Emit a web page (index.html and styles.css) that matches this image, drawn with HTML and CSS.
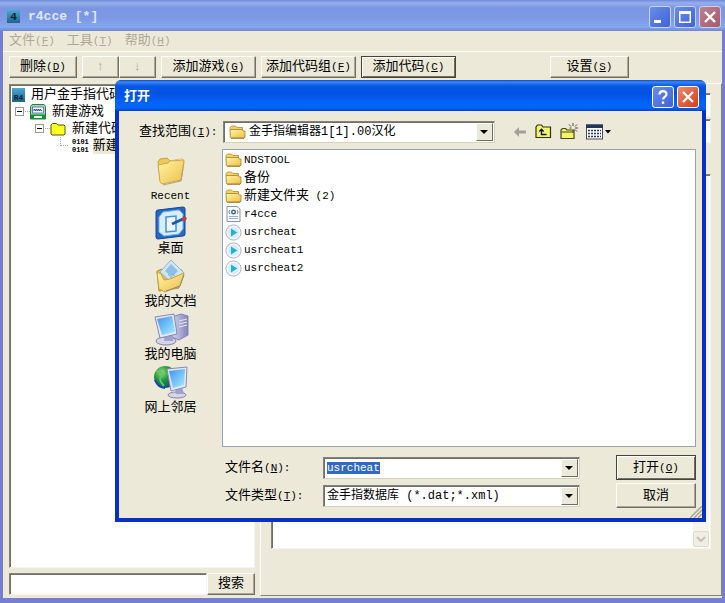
FILE: index.html
```html
<!DOCTYPE html>
<html lang="zh-CN">
<head>
  <meta charset="UTF-8" />
  <meta name="viewport" content="width=device-width, initial-scale=1.0" />
  <title>r4cce [*]</title>
  <link rel="stylesheet" href="styles.css">
</head>
<body>
  <!-- shared icons -->
  <svg class="defs" width="0" height="0">
    <defs>
      <linearGradient id="gold" x1="0" y1="0" x2="1" y2="1">
        <stop offset="0" stop-color="#fff6a8" /><stop offset="1" stop-color="#eebd48" />
      </linearGradient>
      <linearGradient id="screen" x1="0" y1="0" x2="1" y2="1">
        <stop offset="0" stop-color="#3f92f0" /><stop offset="1" stop-color="#a5efff" />
      </linearGradient>
      <linearGradient id="metal" x1="0" y1="0" x2="1" y2="0">
        <stop offset="0" stop-color="#d4d5ee" /><stop offset="1" stop-color="#8184b8" />
      </linearGradient>
      <linearGradient id="teal" x1="0" y1="0" x2="0" y2="1">
        <stop offset="0" stop-color="#4ba9d4" /><stop offset="1" stop-color="#1c6688" />
      </linearGradient>
      <radialGradient id="globe" cx="0.35" cy="0.3" r="0.8">
        <stop offset="0" stop-color="#8fe07a" /><stop offset="0.45" stop-color="#23953a" /><stop offset="1" stop-color="#0b3f9e" />
      </radialGradient>
    </defs>
    <symbol id="folder" viewBox="0 0 17 16">
      <path d="M1 3.5 2.5 2h4L8 3.5h5.5V6H3.5L2 13z" fill="#f3d366" stroke="#b08a2c" stroke-width=".8" />
      <path d="M1.3 13.3 1 5.5h12.2l.8 1.5h2v5.8l-1.5 1.2H2z" fill="url(#gold)" stroke="#b18b30" stroke-width=".9" />
      <path d="M2 14.3h13l1.2-1.4" fill="none" stroke="#94711f" stroke-width=".8" />
    </symbol>
    <symbol id="media" viewBox="0 0 17 17">
      <circle cx="8.5" cy="8.5" r="7.6" fill="#f3f8fd" stroke="#a8b2c4" />
      <circle cx="8.5" cy="8.5" r="5.8" fill="#d9eefb" />
      <path d="M6 4.5 12.3 8.5 6 12.5z" fill="#1fb0dc" />
    </symbol>
    <symbol id="cross" viewBox="0 0 20 20">
      <path d="M5 5 15 15M15 5 5 15" stroke="#fff" stroke-width="2.4" fill="none" />
    </symbol>
  </svg>

  <div class="window">
    <header class="titlebar">
      <svg class="app-icon" width="13" height="13" viewBox="0 0 13 13">
        <rect width="13" height="13" fill="url(#teal)" />
        <text x="6.5" y="10" text-anchor="middle">4</text>
      </svg>
      <h1>r4cce [*]</h1>
      <button class="caption" aria-label="最小化"><svg viewBox="0 0 20 20"><path d="M4 13h7v3H4z" fill="#fff" /></svg></button>
      <button class="caption" aria-label="最大化"><svg viewBox="0 0 20 20"><path d="M4 4h12v12H4zM5.5 7v7.5h9V7z" fill="#fff" fill-rule="evenodd" /></svg></button>
      <button class="caption close" aria-label="关闭"><svg><use href="#cross" /></svg></button>
    </header>

    <nav class="menubar">
      <a href="#">文件<span class="en">(<u>F</u>)</span></a>
      <a href="#">工具<span class="en">(<u>T</u>)</span></a>
      <a href="#">帮助<span class="en">(<u>H</u>)</span></a>
    </nav>

    <div class="toolbar">
      <button class="btn small">删除<span class="en">(<u>D</u>)</span></button>
      <div class="pair">
        <button class="btn" disabled>↑</button>
        <button class="btn" disabled>↓</button>
      </div>
      <button class="btn">添加游戏<span class="en">(<u>G</u>)</span></button>
      <button class="btn">添加代码组<span class="en">(<u>F</u>)</span></button>
      <button class="btn default">添加代码<span class="en">(<u>C</u>)</span></button>
      <button class="btn settings">设置<span class="en">(<u>S</u>)</span></button>
    </div>

    <main class="content">
      <section class="side">
        <ul class="tree sunken">
          <li>
            <svg class="app-icon" width="13" height="14" viewBox="0 0 13 14">
              <rect width="13" height="14" fill="url(#teal)" />
              <text class="tiny" x="6.5" y="12" text-anchor="middle">R4</text>
            </svg>
            <span>用户金手指代码</span>
          </li>
          <li class="level1">
            <i class="expander"></i>
            <svg width="16" height="16" viewBox="0 0 16 16">
              <path d="M2 .5h12l1.500 2V15H.5V2.500z" fill="#a5d8b0" stroke="#2f7a49" />
              <rect x="2.500" y="3" width="11" height="6" fill="#f4f8ff" stroke="#4a6ea0" stroke-width=".8" />
              <path d="M4 7V5l2 2V5l2 2V5l2 2V5l2 2" stroke="#3848a2" stroke-width="1" fill="none" />
              <path d="M1 10.500h14V15H1z" fill="#129238" /><path d="M4 12h8v2H4z" fill="#eafbe8" />
            </svg>
            <span>新建游戏</span>
          </li>
          <li class="level2">
            <i class="expander"></i>
            <svg width="16" height="14" viewBox="0 0 16 14">
              <path d="M1 12V3l1.500-1.500h4L8 3h6l1 1v8l-1 1H2z" fill="#ffff20" stroke="#55550c" />
            </svg>
            <span>新建代码</span>
          </li>
          <li class="level3">
            <i class="branch"></i>
            <span class="bits">0101<br>0101</span>
            <span class="current">新建</span>
          </li>
        </ul>
        <form class="search">
          <input type="text" class="sunken" aria-label="搜索">
          <button type="button" class="btn">搜索</button>
        </form>
      </section>

      <section class="editor">
        <input type="text" class="sunken" aria-label="名称">
        <input type="text" class="sunken" aria-label="编号">
        <div class="memo">
          <textarea class="sunken" aria-label="代码"></textarea>
          <span class="scroll-down"><svg width="10" height="6" viewBox="0 0 10 6"><path d="M1 1l4 4 4-4" fill="none" stroke="#c3c2b8" stroke-width="2" /></svg></span>
        </div>
      </section>
    </main>
  </div>

  <div class="dialog" role="dialog" aria-label="打开">
    <header class="titlebar">
      <h2>打开</h2>
      <button class="caption" aria-label="帮助"><svg viewBox="0 0 20 20"><path d="M6.500 7.500C6.500 3 13.500 3 13.500 7c0 2.800-3.500 2.800-3.500 5.500" stroke="#fff" stroke-width="2.200" fill="none" /><path d="M8.800 14.500h2.400v2.300H8.800z" fill="#fff" /></svg></button>
      <button class="caption close" aria-label="关闭"><svg><use href="#cross" /></svg></button>
    </header>

    <div class="dialog-body">
      <div class="lookup">
        <label for="lookIn">查找范围<span class="en">(<u>I</u>):</span></label>
        <div class="combo look-in">
          <svg class="combo-icon" width="17" height="16"><use href="#folder" /></svg>
          <select id="lookIn"><option>金手指编辑器1[1].00汉化</option></select>
          <i class="arrow"></i>
        </div>
        <div class="tools">
          <button aria-label="后退"><svg width="14" height="12" viewBox="0 0 14 12"><path d="M1 6l5-5v3.500h7v3H6V11z" fill="#a3a197" /></svg></button>
          <button aria-label="向上一级">
            <svg width="17" height="15" viewBox="0 0 17 15">
              <path d="M1 13.500V3l1.500-2h4L8 3h7.500v10.500z" fill="#f4f36c" stroke="#33320d" stroke-width="1.200" />
              <path d="M6.500 5.500V10.500h5M4.300 7.500l2.200-2.300 2.200 2.300" fill="none" stroke="#111" stroke-width="1.300" />
            </svg>
          </button>
          <button aria-label="新建文件夹">
            <svg width="18" height="17" viewBox="0 0 18 17">
              <path d="M1 15.500V7l1.500-1.500h3L7 7h7v8.500z" fill="#f4f36c" stroke="#4a4915" stroke-width="1.200" />
              <path d="M1.500 9h12" stroke="#4a4915" />
              <path d="M13 0v3M13 7v3M9 1.500l2 2M15 6.500l2 2M9.500 5h2M15 5h3M17 1.500l-2 2" stroke="#4a493a" />
            </svg>
          </button>
          <button aria-label="查看">
            <svg width="25" height="16" viewBox="0 0 25 16">
              <rect x=".5" y="1" width="16" height="14" fill="#fff" stroke="#474a63" />
              <path d="M0 .5h17V4H0z" fill="#26335f" />
              <path d="M2 6.500h13M2 9.500h13M2 12.500h13" stroke="#2d3458" stroke-width="1.600" stroke-dasharray="2 1" />
              <path d="M19 6h6l-3 3.500z" fill="#000" />
            </svg>
          </button>
        </div>
      </div>

      <div class="browse">
        <ul class="places">
          <li>
            <svg width="34" height="34" viewBox="0 0 34 34">
              <path d="M6 27 4 9l2-3 7-1 3 3 12-2 2 3-3 18z" fill="#ecc95c" stroke="#c9a23c" />
              <path d="M15 8l13-2 1 2-14 3z" fill="#fbf3c4" />
              <path d="M4 12l10-2 2-2 14-1-3 20-19 4-2-2z" fill="url(#gold)" stroke="#cfa847" />
              <path d="M9 32l18-4 2-12" stroke="#a9a388" stroke-width="1" fill="none" />
            </svg>
            <span class="en">Recent</span>
          </li>
          <li>
            <svg width="34" height="34" viewBox="0 0 34 34">
              <path d="M2 6q0-2 2-2l25-3q2 0 2 2v25q0 2-2 2L4 33q-2 0-2-2z" fill="#2468c4" stroke="#15469a" />
              <path d="M9 6l16-2 4 4v15l-4 5-15 2-5-4V11z" fill="#d7edfc" stroke="#73b4e9" />
              <path d="M12 11l10-1v15l-10 1z" fill="#eaf6ff" stroke="#4c8fd8" stroke-width="1.500" />
              <path d="M18 18l11-5" stroke="#1f5aa8" stroke-width="3" />
              <path d="M29 10l4 2-2 4-3-2z" fill="#b8403a" />
            </svg>
            <span>桌面</span>
          </li>
          <li>
            <svg width="34" height="34" viewBox="0 0 34 34">
              <path d="M3 12l5-2 3 3 17-2-3 18-20 3z" fill="#e9bd44" stroke="#ba8c2c" />
              <path d="M17 1l13 13-8 14L6 13z" fill="#cfe6f7" stroke="#8fb4d2" />
              <path d="M17 5l7 7-6 6-7-6z" fill="#8cc0e6" />
              <path d="M14 15l6 7M18 14l5 5" stroke="#8cb2d0" />
              <path d="M3 13l4 2 3 6 6-1 14-6-4 13-15 6-6-3z" fill="url(#gold)" stroke="#cda03a" />
              <path d="M12 32l14-5 4-11" stroke="#8d8878" fill="none" />
            </svg>
            <span>我的文档</span>
          </li>
          <li>
            <svg width="36" height="34" viewBox="0 0 36 34">
              <path d="M19 5l9-3 7 2v19l-9 5-7-3z" fill="url(#metal)" stroke="#8583b8" />
              <path d="M26 9l8-2M26 12l8-2M26 15l8-2" stroke="#e8e8f8" />
              <ellipse cx="13" cy="29" rx="10" ry="4" fill="#d5d5ea" stroke="#8583aa" />
              <path d="M12 21h7l1 8h-9z" fill="#9fa2ce" />
              <path d="M2 5l19-3 3 20-17 4z" fill="#e7e6f5" stroke="#8987b5" />
              <path d="M4 7l15-3 3 16-13 3z" fill="url(#screen)" />
            </svg>
            <span>我的电脑</span>
          </li>
          <li>
            <svg width="36" height="34" viewBox="0 0 36 34">
              <circle cx="12" cy="12" r="11" fill="url(#globe)" />
              <path d="M3 6c5 0 8 3 5 6s1 6 3 9" stroke="#5fc56e" stroke-width="2" fill="none" />
              <path d="M2 15c2 5 6 8 10 8" stroke="#1846a8" stroke-width="2" fill="none" />
              <ellipse cx="24" cy="30" rx="9" ry="3" fill="#d5d5ea" stroke="#8583aa" />
              <path d="M22 22h7l2 7h-8z" fill="#9fa2ce" />
              <path d="M14 4l20-2-1 20-15 4z" fill="#e7e6f5" stroke="#8987b5" />
              <path d="M16 6l16-2-1 16-11 3z" fill="url(#screen)" />
            </svg>
            <span>网上邻居</span>
          </li>
        </ul>

        <ul class="files">
          <li><svg width="17" height="16"><use href="#folder" /></svg><span class="en">NDSTOOL</span></li>
          <li><svg width="17" height="16"><use href="#folder" /></svg><span>备份</span></li>
          <li><svg width="17" height="16"><use href="#folder" /></svg><span>新建文件夹<span class="en"> (2)</span></span></li>
          <li>
            <svg width="17" height="16" viewBox="0 0 17 16">
              <path d="M2 .5h10L15 3v12.500H2z" fill="#f8fbff" stroke="#8693a6" />
              <path d="M4 12.500h9M4 10.500h9" stroke="#9bb1c8" />
              <circle cx="8.500" cy="6" r="2.500" fill="#416f99" /><circle cx="8.500" cy="6" r="1" fill="#fff" />
              <path d="M5 4 3.800 6 5 8M12 4l1.200 2L12 8" stroke="#6685a6" fill="none" />
            </svg>
            <span class="en">r4cce</span>
          </li>
          <li><svg width="17" height="17"><use href="#media" /></svg><span class="en">usrcheat</span></li>
          <li><svg width="17" height="17"><use href="#media" /></svg><span class="en">usrcheat1</span></li>
          <li><svg width="17" height="17"><use href="#media" /></svg><span class="en">usrcheat2</span></li>
        </ul>
      </div>

      <form class="fields">
        <label for="fileName">文件名<span class="en">(<u>N</u>):</span></label>
        <div class="combo">
          <input type="text" id="fileName" class="en" value="usrcheat" autocomplete="off">
          <i class="arrow"></i>
        </div>
        <button type="button" class="btn default">打开<span class="en">(<u>O</u>)</span></button>

        <label for="fileType">文件类型<span class="en">(<u>T</u>):</span></label>
        <div class="combo">
          <select id="fileType"><option>金手指数据库 (*.dat;*.xml)</option></select>
          <i class="arrow"></i>
        </div>
        <button type="button" class="btn">取消</button>
      </form>
    </div>
    <svg class="grip" width="12" height="12" viewBox="0 0 12 12">
      <path d="M0 12 12 0M4 12l8-8M8 12l4-4" stroke="#aaa693" stroke-width="1.500" />
    </svg>
  </div>

  <script>
    const fileName = document.getElementById("fileName");
    fileName.focus();
    fileName.select();
  </script>
</body>
</html>
```
FILE: styles.css
```css
* {
  box-sizing: border-box;
  margin: 0;
  padding: 0;
}
body {
  position: relative;
  font-family: "Liberation Mono", "Noto Sans CJK SC", monospace;
  font-size: 13px;
  line-height: 16px;
  color: #000;
  background: #ece9d8;
}
button, input, select, textarea {
  font: inherit;
  color: inherit;
  border-radius: 0;
  outline: none;
}
ul {
  list-style: none;
}
svg {
  display: block;
  flex: none;
}
.defs {
  position: absolute;
}
.en {
  font-size: 11px;
  white-space: pre;
}

/* main window */
.window {
  display: flex;
  flex-direction: column;
  min-height: 100vh;
  border: solid #7480cf;
  border-width: 0 3px 5px 3px;
}
.titlebar {
  display: flex;
  align-items: center;
  gap: 2px;
  height: 31px;
  color: #fff;
}
.window > .titlebar {
  margin: 0 -3px;
  padding: 2px 3px 0 7px;
  background: linear-gradient(#7188dc 0, #96afed 3px, #7b96e0 8px, #7d99e4 18px, #83a8ee 27px, #6f85d4 31px);
}
.titlebar h1, .titlebar h2 {
  flex: 1;
  font-size: 13px;
  font-weight: bold;
}
.titlebar h1 {
  padding-left: 6px;
  color: #dde6fb;
}
.app-icon text {
  font-size: 11px;
  font-weight: bold;
  fill: #06222f;
}
.app-icon .tiny {
  font-size: 8px;
}
.caption {
  width: 22px;
  height: 22px;
  margin-right: 1px;
  border: 1px solid #c4d3f7;
  border-radius: 3px;
  background: linear-gradient(135deg, #6a8cec, #3d63d8);
}
.caption svg {
  width: 20px;
  height: 20px;
}
.window .caption.close {
  background: linear-gradient(135deg, #c0808f, #a9596a);
}
.menubar {
  display: flex;
  gap: 12px;
  height: 21px;
  padding: 2px 6px;
  border-bottom: 1px solid #fff;
}
.menubar a {
  color: #aca899;
  text-decoration: none;
}
.toolbar {
  display: flex;
  gap: 5px;
  padding: 4px 6px 5px;
}
.btn {
  width: 95px;
  height: 22px;
  border: 1px solid;
  border-color: #fff #716f64 #716f64 #fff;
  box-shadow: inset -1px -1px #aca899;
  background: #ece9d8;
  line-height: 18px;
  white-space: nowrap;
}
.btn.default {
  border-color: #45443c;
  box-shadow: inset 1px 1px #fff, inset -1px -1px #716f64;
}
.btn:disabled {
  color: #aca899;
}
.btn.small {
  width: 68px;
}
.pair {
  display: flex;
}
.pair .btn {
  width: 37px;
}
.settings {
  width: 79px;
  margin-left: 89px;
}
.content {
  display: flex;
  flex: 1;
  gap: 5px;
}
.sunken {
  border: 1px solid;
  border-color: #84827a #f5f4ec #f5f4ec #84827a;
  box-shadow: inset 1px 1px #716f64;
  background: #fff;
}
.side {
  display: flex;
  flex-direction: column;
  width: 252px;
  padding: 1px 0 3px 6px;
}
.tree {
  flex: 1;
  padding: 1px 2px;
}
.tree li {
  display: flex;
  align-items: center;
  height: 17px;
  gap: 6px;
  white-space: nowrap;
}
.tree .level1 {
  padding-left: 3px;
}
.tree .level2 {
  padding-left: 23px;
}
.tree .level3 {
  padding-left: 48px;
  gap: 4px;
}
.expander {
  position: relative;
  display: flex;
  align-items: center;
  justify-content: center;
  width: 9px;
  height: 9px;
  border: 1px solid #9c9a90;
}
.expander::before {
  content: "";
  width: 5px;
  height: 1px;
  background: #000;
}
.expander::after {
  content: "";
  position: absolute;
  left: 9px;
  width: 5px;
  border-top: 1px dotted #aca899;
}
.branch {
  width: 8px;
  height: 9px;
  margin-bottom: 8px;
  border: dotted #aca899;
  border-width: 0 0 1px 1px;
}
.bits {
  font-size: 7px;
  font-weight: bold;
  line-height: 8px;
}
.current {
  background: #ece9d8;
}
.search {
  display: flex;
  margin-top: 5px;
}
.search input {
  flex: 1;
  min-width: 0;
  height: 22px;
}
.search .btn {
  width: 48px;
}
.editor {
  display: flex;
  flex-direction: column;
  flex: 1;
  margin-bottom: 2px;
  padding: 9px 10px 46px;
  border: 1px solid;
  border-color: #fff #84827a #84827a #fff;
}
.editor input {
  height: 24px;
  margin-bottom: 2px;
}
.memo {
  position: relative;
  display: flex;
  flex: 1;
  margin-top: 29px;
}
.memo textarea {
  flex: 1;
  resize: none;
}
.scroll-down {
  position: absolute;
  right: 2px;
  bottom: 2px;
  display: flex;
  align-items: center;
  justify-content: center;
  width: 16px;
  height: 16px;
  border: 1px solid #dddacb;
  border-radius: 2px;
  background: #f0eee3;
}
.memo::after {
  content: "";
  position: absolute;
  top: 2px;
  right: 2px;
  bottom: 18px;
  width: 16px;
  background: #f5f4ee;
}

/* open dialog */
.dialog {
  position: absolute;
  top: 80px;
  left: 115px;
  right: 19px;
  border: solid #0831c4;
  border-width: 0 4px 4px 4px;
  border-radius: 7px 7px 0 0;
  background: #ece9d8;
}
.dialog > .titlebar {
  margin: 0 -4px;
  padding: 2px 6px 0 9px;
  border-radius: 6px 6px 0 0;
  background: linear-gradient(#0b49cd 0, #3b86f5 2px, #0757e4 6px, #0353e3 14px, #0266fd 25px, #0263fb 28px, #0342c5 31px);
}
.dialog .caption {
  border-color: #fff;
}
.dialog .caption.close {
  background: linear-gradient(135deg, #ed8a6d, #d83b16);
}
.dialog-body {
  padding: 9px 6px 10px 0;
}
.lookup {
  display: flex;
  align-items: center;
  height: 23px;
}
.lookup label {
  width: 104px;
  padding-left: 20px;
  white-space: nowrap;
}
.combo {
  position: relative;
  display: flex;
  align-items: center;
  height: 22px;
  border: 1px solid;
  border-color: #84827a #d6d2c0 #d6d2c0 #84827a;
  box-shadow: inset 1px 1px #716f64;
  background: #fff;
}
.combo select, .combo input {
  flex: 1;
  min-width: 0;
  height: 18px;
  padding: 0 18px 0 3px;
  border: none;
  background: none;
  appearance: none;
}
#fileType {
  font-size: 12px;
}
.look-in {
  flex: 0 1 272px;
  padding-left: 5px;
}
.look-in select {
  font-size: 12px;
}
.combo .arrow {
  position: absolute;
  top: 1px;
  right: 1px;
  bottom: 1px;
  width: 17px;
  border: 1px solid;
  border-color: #fff #716f64 #716f64 #fff;
  background: #ece9d8;
  pointer-events: none;
}
.arrow::before {
  content: "";
  position: absolute;
  top: 6px;
  left: 3px;
  border: 4px solid transparent;
  border-top-color: #000;
  border-bottom: none;
}
::selection {
  color: #fff;
  background: #316ac5;
}
.tools {
  display: flex;
  align-items: center;
  gap: 8px;
  padding-left: 18px;
}
.tools button {
  border: none;
  background: none;
}
.browse {
  display: flex;
  margin-top: 6px;
}
.places {
  display: flex;
  flex-direction: column;
  width: 103px;
  padding-top: 4px;
}
.places li {
  display: flex;
  flex-direction: column;
  align-items: center;
  height: 53px;
  gap: 1px;
}
.files {
  flex: 1;
  min-height: 298px;
  padding: 1px 2px;
  border: 1px solid #93a5b0;
  background: #fff;
}
.files li {
  display: flex;
  align-items: center;
  height: 18px;
  gap: 2px;
}
.fields {
  display: grid;
  grid-template-columns: 98px 1fr 80px;
  align-items: center;
  row-gap: 3px;
  margin-top: 8px;
  padding-left: 106px;
}
.fields .combo {
  margin-right: 36px;
}
.fields .btn {
  width: 80px;
  height: 25px;
}
.grip {
  position: absolute;
  right: 0;
  bottom: 0;
}
```
